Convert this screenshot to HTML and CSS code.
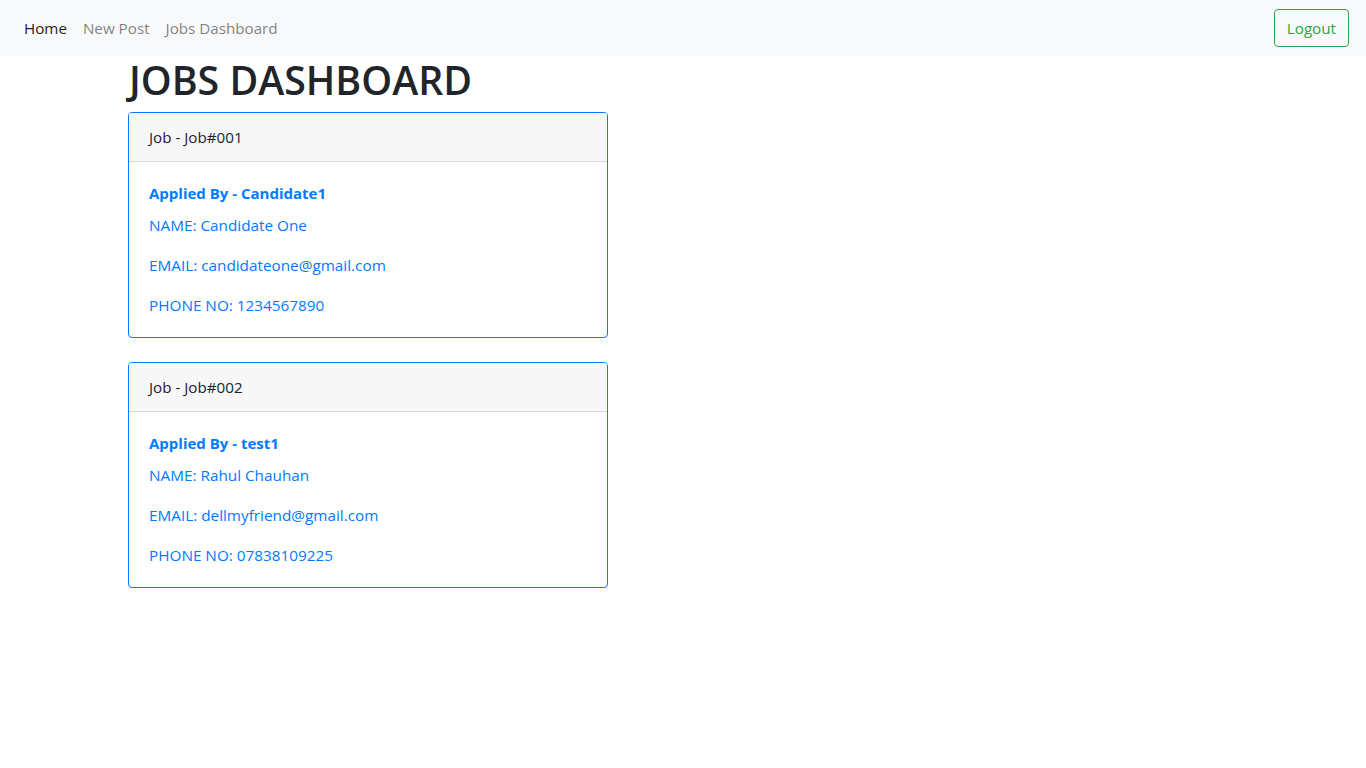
FILE: index.html
```html
<!DOCTYPE html>
<html lang="en">
<head>
<meta charset="utf-8">
<title>Jobs Dashboard</title>
<link rel="stylesheet" href="styles.css">
</head>
<body>
<nav class="navbar">
  <ul class="nav">
    <li><a class="nav-link active" href="#">Home</a></li>
    <li><a class="nav-link" href="#">New Post</a></li>
    <li><a class="nav-link" href="#">Jobs Dashboard</a></li>
  </ul>
  <button class="btn-logout" type="button">Logout</button>
</nav>
<main class="container">
  <h1 class="page-title">JOBS DASHBOARD</h1>
  <div class="card">
    <div class="card-header">Job - Job#001</div>
    <div class="card-body">
      <h6 class="card-title">Applied By - Candidate1</h6>
      <p class="card-text">NAME: Candidate One</p>
      <p class="card-text">EMAIL: candidateone@gmail.com</p>
      <p class="card-text">PHONE NO: 1234567890</p>
    </div>
  </div>
  <div class="card">
    <div class="card-header">Job - Job#002</div>
    <div class="card-body">
      <h6 class="card-title">Applied By - test1</h6>
      <p class="card-text">NAME: Rahul Chauhan</p>
      <p class="card-text">EMAIL: dellmyfriend@gmail.com</p>
      <p class="card-text">PHONE NO: 07838109225</p>
    </div>
  </div>
</main>
</body>
</html>
```
FILE: styles.css
```css
* { box-sizing: border-box; }
html, body { margin: 0; padding: 0; }
body {
  font-family: "Open Sans", "Noto Sans", "Liberation Sans", sans-serif;
  font-size: 16px;
  line-height: 1.5;
  color: #212529;
  background: #fff;
}
.navbar {
  display: flex;
  align-items: center;
  justify-content: space-between;
  height: 56px;
  padding: 8px 16px;
  background: #f8f9fa;
}
.nav {
  display: flex;
  list-style: none;
  margin: 0;
  padding: 0;
}
.nav-link {
  display: block;
  padding: 8px;
  color: rgba(0,0,0,.5);
  text-decoration: none;
  font-size: 15.2px;
}
.nav-link.active { color: rgba(0,0,0,.9); }
.btn-logout {
  font-family: inherit;
  font-size: 15.2px;
  line-height: 24px;
  height: 38px;
  padding: 6px 12px;
  color: #28a745;
  background: transparent;
  border: 1px solid #28a745;
  border-radius: 4px;
  margin-right: 1px;
}
.container {
  width: 1140px;
  margin: 0 auto;
  padding: 0 15px;
}
.page-title {
  margin: 0 0 8px;
  padding-left: 1px;
  font-size: 39.3px;
  font-weight: 600;
  line-height: 48px;
  letter-spacing: 0;
}
.card {
  width: 480px;
  border: 1px solid #007bff;
  border-radius: 4px;
  margin-bottom: 24px;
  overflow: hidden;
}
.card-header {
  padding: 12px 20px;
  background: #f7f7f7;
  border-bottom: 1px solid rgba(0,0,0,.125);
  line-height: 24px;
  font-size: 15.2px;
}
.card-body {
  padding: 20px;
  color: #007bff;
}
.card-title {
  margin: 0 0 9px;
  font-size: 15px;
  font-weight: 700;
  line-height: 22px;
}
.card-text {
  margin: 0 0 16px;
  font-size: 15.3px;
  line-height: 24px;
}
.card-text:last-child { margin-bottom: 0; }
```
